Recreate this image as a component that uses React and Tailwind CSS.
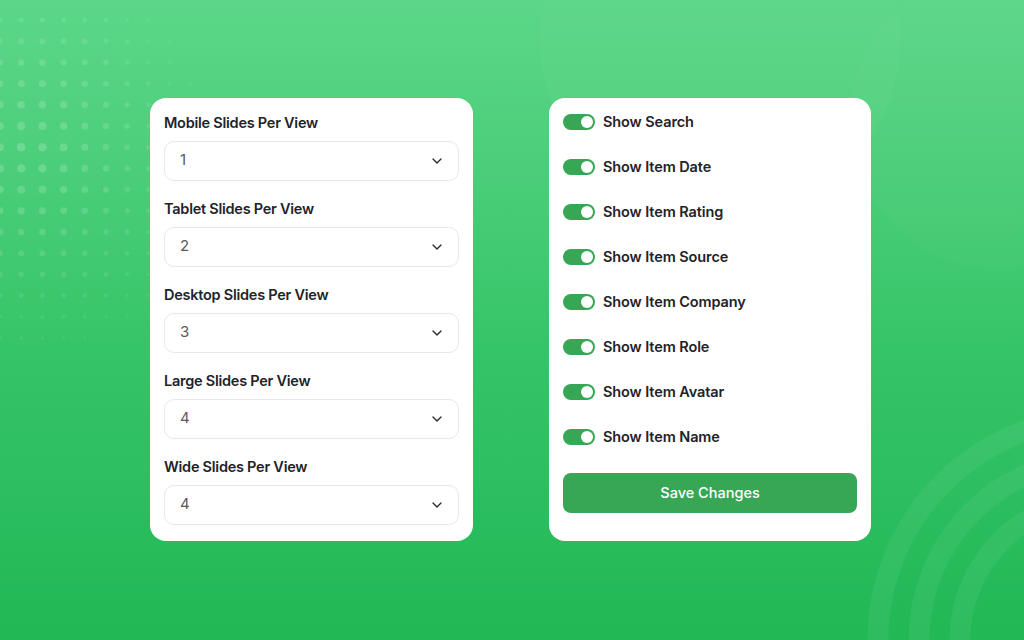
import React from 'react';
import { ChevronDown } from 'lucide-react';

const selects = [
    { label: 'Mobile Slides Per View', value: '1' },
    { label: 'Tablet Slides Per View', value: '2' },
    { label: 'Desktop Slides Per View', value: '3' },
    { label: 'Large Slides Per View', value: '4' },
    { label: 'Wide Slides Per View', value: '4' },
];

const toggles = [
    'Show Search',
    'Show Item Date',
    'Show Item Rating',
    'Show Item Source',
    'Show Item Company',
    'Show Item Role',
    'Show Item Avatar',
    'Show Item Name',
];

// dotted pattern in the top-left corner, fading out
const dots = [];
for (let r = 0; r < 16; r++) {
    for (let c = 0; c < 10; c++) {
        const x = c * 21.2;
        const y = 20 + r * 21.2;
        const dx = (x - 30) / 180;
        const dy = (y - 150) / 210;
        const f = Math.max(0, 1 - Math.sqrt(dx * dx + dy * dy));
        if (f <= 0.02) continue;
        dots.push({ x, y, r: 1.5 + f * 3, o: 0.05 + f * 0.15 });
    }
}

const Backdrop = () => (
    <svg className="absolute inset-0 w-full h-full pointer-events-none" viewBox="0 0 1024 640" preserveAspectRatio="none">
        {dots.map((d, i) => (
            <circle key={i} cx={d.x} cy={d.y} r={d.r} fill="#ffffff" fillOpacity={d.o} />
        ))}
        <circle cx="720" cy="40" r="180" fill="#ffffff" fillOpacity="0.025" />
        <circle cx="1000" cy="120" r="150" fill="#ffffff" fillOpacity="0.02" />
        <g fill="none" stroke="#ffffff" strokeOpacity="0.06" strokeWidth="21">
            <circle cx="1100" cy="640" r="222" />
            <circle cx="1100" cy="640" r="181" />
            <circle cx="1100" cy="640" r="140" />
        </g>
    </svg>
);

const Toggle = () => (
    <span className="w-[32px] h-[16px] rounded-full bg-[#37a756] flex items-center justify-end px-[2px] shrink-0">
        <span className="w-[12px] h-[12px] rounded-full bg-white" />
    </span>
);

const App = () => {
    return (
        <div
            className="relative w-full h-[640px] overflow-hidden bg-linear-to-b from-[#5cd789] via-[#35c467] via-55% to-[#21b856] flex items-center justify-center"
            style={{ fontFamily: 'Inter, "Open Sans", sans-serif' }}
        >
            <Backdrop />

            <div className="relative flex items-stretch gap-[76px] mr-[3px] mb-[2px]">
                {/* Slides per view */}
                <div className="w-[323px] bg-white rounded-[16px] px-[14px] pt-[15px] pb-[16px] flex flex-col gap-[18px]">
                    {selects.map((s) => (
                        <div key={s.label} className="flex flex-col gap-[8px]">
                            <label className="text-[14.5px] leading-[20px] font-semibold text-[#222327] tracking-[-0.25px]">
                                {s.label}
                            </label>
                            <div className="h-[40px] rounded-[10px] border border-[#e8e8ea] flex items-center justify-between pl-[15px] pr-[13px]">
                                <span className="text-[15px] text-[#5a5a5e]">{s.value}</span>
                                <ChevronDown size={16} strokeWidth={2} className="text-[#2a2a2e]" />
                            </div>
                        </div>
                    ))}
                </div>

                {/* Visibility toggles */}
                <div className="w-[322px] bg-white rounded-[16px] px-[14px] pt-[12px] pb-[28px] flex flex-col">
                    <div className="flex flex-col gap-[21px]">
                        {toggles.map((t) => (
                            <div key={t} className="h-[24px] flex items-center gap-[8px]">
                                <Toggle />
                                <span className="text-[14.5px] font-semibold text-[#222327] tracking-[-0.1px]">{t}</span>
                            </div>
                        ))}
                    </div>
                    <button className="mt-[24px] h-[40px] rounded-[8px] bg-[#37a756] text-white text-[14.5px] font-medium">
                        Save Changes
                    </button>
                </div>
            </div>
        </div>
    );
};

export default App;
